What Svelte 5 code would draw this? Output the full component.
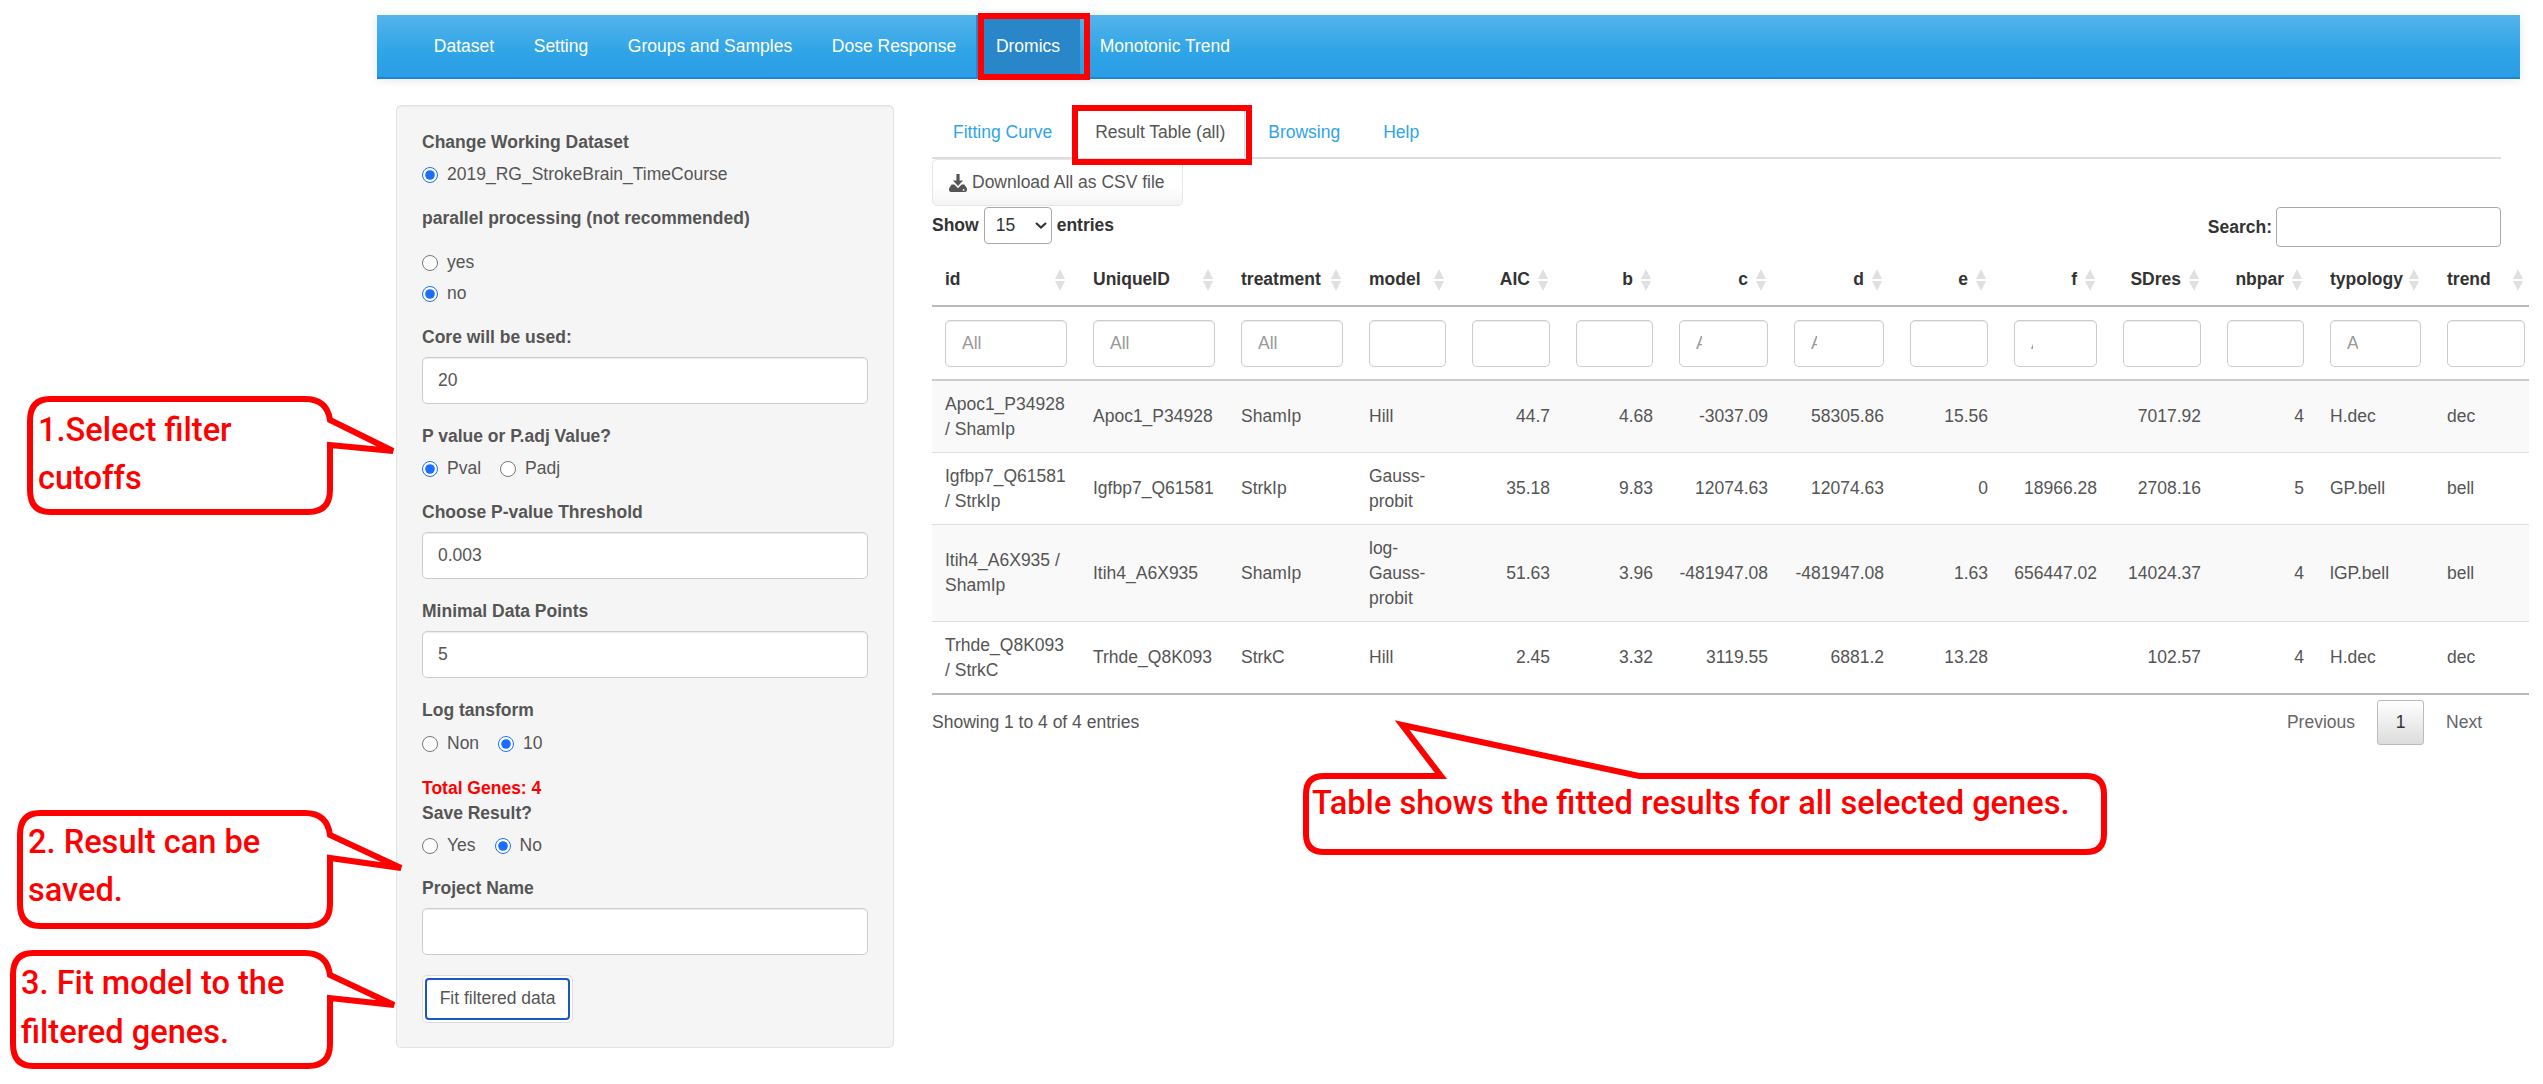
<script lang="ts">
  const navItems = ["Dataset", "Setting", "Groups and Samples", "Dose Response", "Dromics", "Monotonic Trend"];
  const tabs = ["Fitting Curve", "Result Table (all)", "Browsing", "Help"];

  // width, alignment, placeholder and how many px of it stay visible in the narrow filter box
  const columns = [
    { name: "id", width: 148, num: false, ph: "All", show: 95 },
    { name: "UniqueID", width: 148, num: false, ph: "All", show: 95 },
    { name: "treatment", width: 128, num: false, ph: "All", show: 70 },
    { name: "model", width: 103, num: false, ph: "", show: 50 },
    { name: "AIC", width: 104, num: true, ph: "", show: 50 },
    { name: "b", width: 103, num: true, ph: "", show: 50 },
    { name: "c", width: 115, num: true, ph: "All", show: 7 },
    { name: "d", width: 116, num: true, ph: "All", show: 7 },
    { name: "e", width: 104, num: true, ph: "", show: 50 },
    { name: "f", width: 109, num: true, ph: "All", show: 3 },
    { name: "SDres", width: 104, num: true, ph: "", show: 50 },
    { name: "nbpar", width: 103, num: true, ph: "", show: 50 },
    { name: "typology", width: 117, num: false, ph: "All", show: 12 },
    { name: "trend", width: 104, num: false, ph: "", show: 50 }
  ];

  const rows = [
    ["Apoc1_P34928 / ShamIp", "Apoc1_P34928", "ShamIp", "Hill", "44.7", "4.68", "-3037.09", "58305.86", "15.56", "", "7017.92", "4", "H.dec", "dec"],
    ["Igfbp7_Q61581 / StrkIp", "Igfbp7_Q61581", "StrkIp", "Gauss-probit", "35.18", "9.83", "12074.63", "12074.63", "0", "18966.28", "2708.16", "5", "GP.bell", "bell"],
    ["Itih4_A6X935 / ShamIp", "Itih4_A6X935", "ShamIp", "log-Gauss-probit", "51.63", "3.96", "-481947.08", "-481947.08", "1.63", "656447.02", "14024.37", "4", "lGP.bell", "bell"],
    ["Trhde_Q8K093 / StrkC", "Trhde_Q8K093", "StrkC", "Hill", "2.45", "3.32", "3119.55", "6881.2", "13.28", "", "102.57", "4", "H.dec", "dec"]
  ];

  const callouts = [
    { d: "M50 399 H305 Q327 399 330 420 L393 451 L330 445 V490 Q330 512 308 512 H50 Q30 512 30 490 V421 Q30 399 50 399 Z", lines: ["1.Select filter", "cutoffs"], x: 38, y: [441, 489] },
    { d: "M40 813 H305 Q327 813 330 835 L401 868 L330 858 V904 Q330 926 308 926 H40 Q20 926 20 904 V835 Q20 813 40 813 Z", lines: ["2. Result can be", "saved."], x: 28, y: [853, 901] },
    { d: "M33 953 H305 Q327 953 330 975 L394 1005 L330 998 V1044 Q330 1066 308 1066 H33 Q13 1066 13 1044 V975 Q13 953 33 953 Z", lines: ["3. Fit model to the", "filtered genes."], x: 21, y: [994, 1043] },
    { d: "M1324 776 H1441 L1402 725 L1639 776 H2086 Q2104 776 2104 794 V834 Q2104 852 2086 852 H1324 Q1306 852 1306 834 V794 Q1306 776 1324 776 Z", lines: ["Table shows the fitted results for all selected genes."], x: 1312, y: [814] }
  ];
</script>

<div class="page">
  <nav class="navbar">
    {#each navItems as item}
      <a class="nav-link" class:active={item === "Dromics"}>{item}</a>
    {/each}
  </nav>

  <div class="layout">
    <aside class="panel">
      <div class="group first">
        <div class="label">Change Working Dataset</div>
        <label class="radio"><input type="radio" checked />2019_RG_StrokeBrain_TimeCourse</label>
      </div>

      <div class="group parallel">
        <div class="label">parallel processing (not recommended)</div>
        <label class="radio"><input type="radio" />yes</label>
        <label class="radio"><input type="radio" checked />no</label>
      </div>

      <div class="group core">
        <div class="label">Core will be used:</div>
        <input class="text-input" value="20" />
      </div>

      <div class="group">
        <div class="label">P value or P.adj Value?</div>
        <div class="inline">
          <label class="radio"><input type="radio" name="p" checked />Pval</label>
          <label class="radio"><input type="radio" name="p" />Padj</label>
        </div>
      </div>

      <div class="group threshold">
        <div class="label">Choose P-value Threshold</div>
        <input class="text-input" value="0.003" />
      </div>

      <div class="group">
        <div class="label">Minimal Data Points</div>
        <input class="text-input" value="5" />
      </div>

      <div class="group logt">
        <div class="label">Log tansform</div>
        <div class="inline">
          <label class="radio"><input type="radio" name="l" />Non</label>
          <label class="radio"><input type="radio" name="l" checked />10</label>
        </div>
      </div>

      <div class="total">Total Genes: 4</div>

      <div class="group save">
        <div class="label">Save Result?</div>
        <div class="inline">
          <label class="radio"><input type="radio" name="s" />Yes</label>
          <label class="radio"><input type="radio" name="s" checked />No</label>
        </div>
      </div>

      <div class="group project">
        <div class="label">Project Name</div>
        <input class="text-input" />
      </div>

      <button class="fit-btn"><span>Fit filtered data</span></button>
    </aside>

    <main class="content">
      <ul class="tabs">
        {#each tabs as tab, i}
          <li class="tab" class:active={i === 1}>{tab}</li>
        {/each}
      </ul>

      <button class="download">
        <svg width="18" height="18" viewBox="0 0 18 18" fill="#555">
          <path d="M7.4 0h3.2v6.6H14L9 12 4 6.6h3.4z" />
          <path fill-rule="evenodd" d="M2.6 10.6h2.8L9 14.2l3.6-3.6h2.8L18 14.6V16a2 2 0 0 1-2 2H2a2 2 0 0 1-2-2v-1.4zM14.6 15a.9.9 0 1 0 0 1.8.9.9 0 0 0 0-1.8z" />
        </svg>
        Download All as CSV file
      </button>

      <div class="controls">
        <div class="length">
          <b>Show</b>
          <div class="select-wrap">
            <select><option>15</option></select>
            <svg class="chevron" width="12" height="7" viewBox="0 0 12 7" fill="none" stroke="#333" stroke-width="2.2">
              <path d="M1 1l5 4.5L11 1" />
            </svg>
          </div>
          <b>entries</b>
        </div>
        <div class="search">
          <b>Search:</b>
          <input />
        </div>
      </div>

      <div class="table-wrap">
        <table>
          <colgroup>
            {#each columns as col}
              <col style="width: {col.width}px" />
            {/each}
          </colgroup>
          <thead>
            <tr class="head">
              {#each columns as col}
                <th class:num={col.num}>
                  {col.name}
                  <svg class="sort" width="10" height="22" viewBox="0 0 10 22" fill="#e0e0e0">
                    <path d="M5 0l5 10H0z" />
                    <path d="M5 22l5-10H0z" />
                  </svg>
                </th>
              {/each}
            </tr>
            <tr class="filters">
              {#each columns as col}
                <td>
                  <input class="filter" placeholder={col.ph} style="padding-right: {col.width - 25 - 18 - col.show}px" />
                </td>
              {/each}
            </tr>
          </thead>
          <tbody>
            {#each rows as row, r}
              <tr class:odd={r % 2 === 0}>
                {#each row as cell, c}
                  <td class:num={columns[c].num}>{cell}</td>
                {/each}
              </tr>
            {/each}
          </tbody>
        </table>
      </div>

      <div class="footer">
        <span>Showing 1 to 4 of 4 entries</span>
        <div class="pager">
          <span>Previous</span>
          <span class="current">1</span>
          <span>Next</span>
        </div>
      </div>
    </main>
  </div>

  <!-- annotations drawn over the app screenshot -->
  <div class="mark mark-nav"></div>
  <div class="mark mark-tab"></div>
  <svg class="notes" width="2543" height="1084" viewBox="0 0 2543 1084">
    {#each callouts as note}
      <path d={note.d} fill="#fff" stroke="#f00" stroke-width="6" />
      {#each note.lines as line, i}
        <text x={note.x} y={note.y[i]}>{line}</text>
      {/each}
    {/each}
  </svg>
</div>

<style>
  :global(body) {
    margin: 0;
    background: #fff;
  }

  .page {
    position: relative;
    width: 2543px;
    height: 1084px;
    overflow: hidden;
    font-family: "Liberation Sans", Arial, sans-serif;
    font-size: 17.5px;
    line-height: 25px;
    color: #555;
  }

  .navbar {
    display: flex;
    box-sizing: border-box;
    height: 64px;
    margin: 15px 23px 0 377px;
    padding-left: 37px;
    background: linear-gradient(#54b4eb, #2fa4e7 60%, #2b9de5);
    border-bottom: 2px solid #1a85d0;
    box-shadow: 0 1px 10px rgba(0, 0, 0, 0.1);
  }

  .nav-link {
    padding: 19px 19.8px;
    color: #fff;
  }

  .nav-link.active {
    background: #2886c9;
  }

  .layout {
    display: flex;
    gap: 38px;
    margin: 26px 14px 0 396px;
  }

  .panel {
    box-sizing: border-box;
    flex: none;
    width: 498px;
    height: 943px;
    padding: 0 25px;
    background: #f5f5f5;
    border: 1px solid #e3e3e3;
    border-radius: 5px;
    box-shadow: inset 0 1px 1px rgba(0, 0, 0, 0.05);
  }

  .group {
    margin-top: 20px;
  }

  .group.first {
    margin-top: 24px;
  }

  .group.parallel,
  .group.core,
  .group.threshold {
    margin-top: 19px;
  }

  .group.logt .inline {
    margin-top: 8px;
  }

  .group.save {
    margin-top: 0;
  }

  .group.project {
    margin-top: 18px;
  }

  .label {
    font-weight: bold;
    margin-bottom: 7px;
  }

  .logt .label {
    margin-bottom: 0;
  }

  .parallel .label {
    margin-bottom: 19px;
  }

  .radio {
    display: flex;
    align-items: center;
    height: 25px;
    margin-bottom: 6px;
  }

  .inline .radio {
    margin-bottom: 0;
  }

  .radio input {
    width: 16px;
    height: 16px;
    margin: 0 9px 0 0;
    accent-color: #1a6dff;
  }

  .inline {
    display: flex;
    gap: 19px;
  }

  .text-input {
    display: block;
    box-sizing: border-box;
    width: 100%;
    height: 47px;
    padding: 0 15px;
    font: inherit;
    color: #555;
    background: #fff;
    border: 1px solid #ccc;
    border-radius: 5px;
    box-shadow: inset 0 1px 1px rgba(0, 0, 0, 0.075);
  }

  .total {
    margin-top: 20px;
    font-weight: bold;
    color: #f00;
  }

  .fit-btn {
    display: block;
    box-sizing: border-box;
    width: 151px;
    height: 48px;
    margin-top: 20px;
    padding: 2px;
    font: inherit;
    color: #555;
    background: #fff;
    border: 1px solid #ddd;
    border-radius: 5px;
  }

  .fit-btn span {
    display: block;
    height: 100%;
    box-sizing: border-box;
    padding-top: 6px;
    border: 2.5px solid #1a56c4;
    border-radius: 4px;
  }

  .content {
    flex: 1;
    min-width: 0;
  }

  .tabs {
    display: flex;
    gap: 4px;
    height: 50px;
    margin: 2px 28px 0 0;
    padding: 0 0 0 1.5px;
    list-style: none;
    border-bottom: 2px solid #ddd;
  }

  .tab {
    box-sizing: border-box;
    height: 51px;
    padding: 13px 19.5px;
    color: #2fa4e7;
  }

  .tab.active {
    color: #555;
    background: #fff;
    border: 1px solid #ddd;
    border-bottom-color: #fff;
    border-radius: 5px 5px 0 0;
    padding: 12px 18.5px;
  }

  .download {
    display: flex;
    align-items: center;
    gap: 5px;
    box-sizing: border-box;
    width: 251px;
    height: 47px;
    padding: 0 16px;
    font: inherit;
    color: #555;
    background: linear-gradient(#fff, #fff 60%, #f4f4f4);
    border: 1px solid #e6e6e6;
    border-radius: 5px;
  }

  .controls {
    display: flex;
    justify-content: space-between;
    align-items: flex-start;
    height: 42px;
    margin-top: 1px;
  }

  .length {
    display: flex;
    align-items: center;
    gap: 5px;
    height: 37px;
    color: #333;
  }

  .select-wrap {
    position: relative;
    height: 37px;
  }

  .select-wrap select {
    appearance: none;
    box-sizing: border-box;
    width: 68px;
    height: 37px;
    padding-left: 11px;
    font: inherit;
    color: #333;
    background: #fff;
    border: 1px solid #aaa;
    border-radius: 4px;
  }

  .chevron {
    position: absolute;
    right: 5px;
    top: 15px;
  }

  .search {
    display: flex;
    align-items: center;
    gap: 4px;
    height: 40px;
    margin-right: 28px;
    color: #333;
  }

  .search input {
    box-sizing: border-box;
    width: 225px;
    height: 40px;
    background: #fff;
    border: 1px solid #aaa;
    border-radius: 4px;
  }

  .table-wrap {
    overflow: hidden;
  }

  table {
    table-layout: fixed;
    width: 1606px;
    border-collapse: collapse;
  }

  th {
    position: relative;
    height: 57px;
    padding: 4px 33px 0 13px;
    box-sizing: border-box;
    font-weight: bold;
    color: #333;
    text-align: left;
    border-bottom: 2px solid #bbb;
  }

  th.num {
    text-align: right;
  }

  .sort {
    position: absolute;
    right: 15px;
    top: 20px;
  }

  .filters td {
    height: 74px;
    padding: 0 13px;
    box-sizing: border-box;
    border-bottom: 2px solid #ccc;
  }

  .filter {
    display: block;
    box-sizing: border-box;
    width: 100%;
    height: 47px;
    padding-left: 16px;
    font: inherit;
    color: #555;
    background: #fff;
    border: 1px solid #ccc;
    border-radius: 5px;
    box-shadow: inset 0 1px 1px rgba(0, 0, 0, 0.075);
  }

  .filter::placeholder {
    color: #999;
  }

  tbody td {
    padding: 10.5px 13px;
    box-sizing: border-box;
    vertical-align: middle;
    border-top: 1px solid #ddd;
  }

  td.num {
    text-align: right;
  }

  tr.odd td {
    background: #f9f9f9;
  }

  tbody tr:last-child td {
    border-bottom: 2px solid #bbb;
  }

  .footer {
    display: flex;
    justify-content: space-between;
    align-items: center;
    height: 46px;
    margin-top: 4px;
  }

  .pager {
    display: flex;
    align-items: center;
    gap: 22px;
    margin-right: 47px;
    color: #666;
  }

  .current {
    box-sizing: border-box;
    width: 47px;
    height: 45px;
    line-height: 43px;
    text-align: center;
    color: #333;
    background: linear-gradient(#fff, #dcdcdc);
    border: 1px solid #bbb;
    border-radius: 3px;
  }

  .mark {
    position: absolute;
    box-sizing: border-box;
    border: 6px solid #f00;
  }

  .mark-nav {
    left: 978px;
    top: 13px;
    width: 112px;
    height: 67px;
  }

  .mark-tab {
    left: 1072px;
    top: 105px;
    width: 180px;
    height: 60px;
  }

  .notes {
    position: absolute;
    left: 0;
    top: 0;
    pointer-events: none;
  }

  .notes text {
    font-family: Roboto, sans-serif;
    font-size: 32.6px;
    font-weight: 500;
    fill: #f00;
  }
</style>
